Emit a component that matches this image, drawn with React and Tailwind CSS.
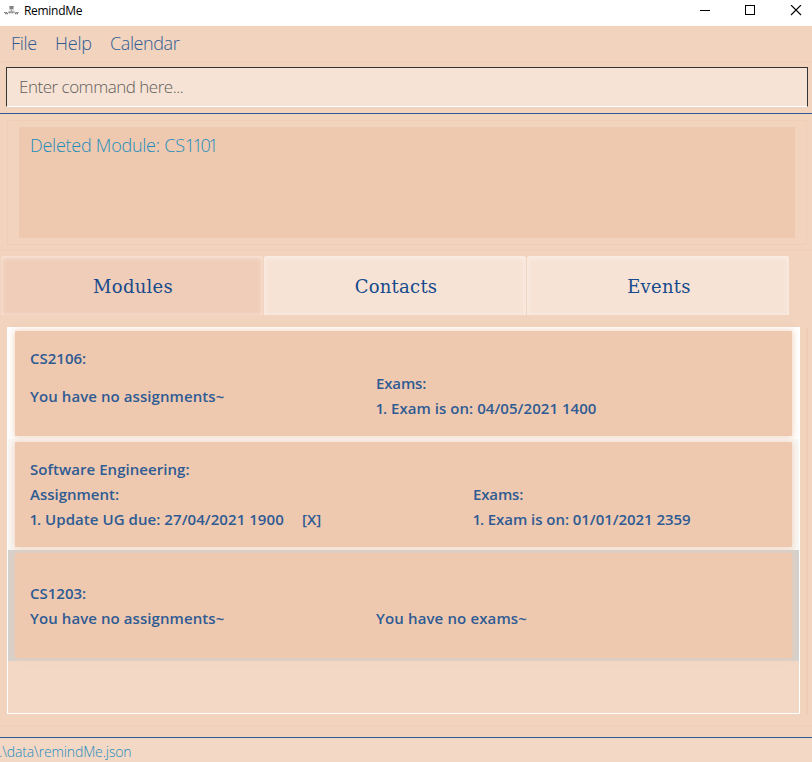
const light = "font-['Open_Sans','Noto_Sans',sans-serif] font-light whitespace-pre";
const tabBase =
  "flex h-[59px] items-center justify-center rounded-t-[3px] font-['DejaVu_Serif',serif] text-[18px] tracking-[0.25px] text-[#174a8c] pt-[2px] pl-[2px]";

function TitleBar() {
  return (
    <header className="flex h-[26px] shrink-0 items-start bg-white">
      <svg className="ml-1 mt-[5px] h-[10px] w-[15px]" viewBox="0 0 15 10">
        <rect x="5.5" y="1" width="4" height="3.5" fill="#909090" />
        <path d="M5.5 1.5h4M5.5 3h4M7.5 4.5v1.5" stroke="#777" strokeWidth=".7" />
        <path d="M4.5 6.3h6" stroke="#888" strokeWidth=".8" />
        <path d="M0 7.5h3.5M11.5 7.5H15M1 8.6h3M4.5 7.6h6M11 8.6h3" stroke="#777" strokeWidth="1.2" strokeDasharray="1.4 .4" fill="none" />
      </svg>
      <span className="ml-[5px] mt-[3px] font-['Open_Sans','Noto_Sans',sans-serif] text-[12px] leading-4 text-black tracking-[-0.3px]">
        RemindMe
      </span>
      <svg className="ml-auto mt-[5px] h-[11px] w-[102px]" viewBox="0 0 102 11" shapeRendering="crispEdges">
        <rect x="0" y="5" width="10" height="1" fill="#000" />
        <rect x="45.5" y="0.5" width="9" height="9" fill="none" stroke="#000" />
        <path d="M91 0l10 10M101 0l-10 10" stroke="#000" strokeWidth="1.1" shapeRendering="auto" />
      </svg>
      <div className="w-[10px]" />
    </header>
  );
}

function Card({ children, selected, className }) {
  return (
    <div
      className={
        selected
          ? "h-[111px] bg-[#d5d1cd] pl-[7px] pr-[7px] pt-[3px]"
          : "h-[111px] pl-[7px] pr-[7px] pt-[3px] " + className
      }
    >
      <div className="flex h-[105px] flex-col rounded-[1px] bg-[#eec9b0] pl-[15px] shadow-[0_0_6px_1px_rgba(238,201,176,0.75)] font-['Open_Sans','Noto_Sans',sans-serif] text-[15px] font-semibold leading-[25px] text-[#2f5b93] whitespace-pre">
        {children}
      </div>
    </div>
  );
}

function Numbered({ children, className = "" }) {
  return (
    <div className={className}>
      <span className="-ml-[0.5px] tracking-[-1.2px]">1</span>
      {". "}
      {children}
    </div>
  );
}

export default function App() {
  return (
    <div className="flex h-[762px] w-[812px] flex-col overflow-hidden bg-[#f1d3be]">
      <TitleBar />
      <nav className={light + " flex h-[36px] shrink-0 items-center border-b border-[#efcdb7] pl-[11px] text-[18px] text-[#2f5b93]"}>
        <span className="w-[44px] tracking-[-0.3px]">File</span>
        <span className="w-[55px] tracking-[-0.2px]">Help</span>
        <span className="tracking-[-0.4px]">Calendar</span>
      </nav>
      <div className="flex h-[51px] shrink-0 items-start px-[6px] pr-[4px] pt-[5px]">
        <div className={light + " flex h-[40px] w-full items-center border border-[#333] border-b-white bg-[#f6e3d5] pl-[12px] text-[17px] tracking-[-0.49px] text-[#625d5a]"}>
          Enter command here...
        </div>
      </div>
      <div className="h-px shrink-0 bg-[#2f5b93]" />
      <section className="flex h-[137px] shrink-0 flex-col border-b border-[#efcdb7] pl-[7px] pr-[5px] pt-[6px]">
        <div className="h-[125px] border border-[#efcdb7] pl-[11px] pr-[11px] pt-[6px]">
          <div className={light + " h-[111px] bg-[#eec9b0] pl-[11px] pt-[5px] text-[18px] leading-[26px] tracking-[-0.25px] text-[#1f8cbb]"}>
            Deleted Module: CS<span className="tracking-[-2.4px]">1101</span>
          </div>
        </div>
      </section>
      <div className="flex shrink-0 gap-px pl-px pt-[5px]">
        <div className={tabBase + " w-[262px] bg-[#f0cdb8] shadow-[inset_0_1px_4px_1px_#f8e5da]"}>Modules</div>
        <div className={tabBase + " w-[262px] bg-[#f6e3d5] shadow-[inset_0_1px_4px_1px_#faeee7]"}>Contacts</div>
        <div className={tabBase + " w-[262px] bg-[#f6e3d5] shadow-[inset_0_1px_4px_1px_#faeee7]"}>Events</div>
      </div>
      <main className="flex h-[411px] shrink-0 border-b border-[#efcdb7] pl-[7px] pt-[12px]">
        <div className="h-[387px] w-[793px] border border-white bg-[#f3d8c6]">
          <Card className="bg-white">
            <div className="pt-[15px]">CS2106:</div>
            <div className="flex">
              <div className="w-[346px] pt-[13px] tracking-[0.08px]">You have no assignments~</div>
              <div>
                <div className="tracking-[-0.15px]">Exams:</div>
                <Numbered className="tracking-[0.05px]">Exam is on: 04/05/2021 1400</Numbered>
              </div>
            </div>
          </Card>
          <Card className="bg-[#f9f8f6]">
            <div className="pt-[15px] tracking-[0.05px]">Software Engineering:</div>
            <div className="flex">
              <div className="w-[443px]">
                <div>Assignment:</div>
                <div className="flex">
                  <Numbered className="w-[272px] tracking-[0.06px]">Update UG due: 27/04/2021 1900</Numbered>
                  <span>[X]</span>
                </div>
              </div>
              <div>
                <div className="tracking-[-0.15px]">Exams:</div>
                <Numbered className="tracking-[-0.05px]">Exam is on: 01/01/2021 2359</Numbered>
              </div>
            </div>
          </Card>
          <Card selected>
            <div className="pt-[28px]">CS1203:</div>
            <div className="flex">
              <div className="w-[346px] tracking-[0.08px]">You have no assignments~</div>
              <div className="tracking-[0.13px]">You have no exams~</div>
            </div>
          </Card>
        </div>
        <div className="ml-[6px] h-[387px] w-[2px] bg-[#efcdb7]" />
      </main>
      <div className="h-[11px] shrink-0" />
      <footer className={light + " h-[25px] shrink-0 border-t border-[#2f5b93] bg-[#f3d8c6] text-[14px] text-[#1f8cbb]"}>
        <div className="-ml-px pt-[4px] leading-[20px] tracking-[-0.14px]">.\data\remindMe.json</div>
      </footer>
    </div>
  );
}
